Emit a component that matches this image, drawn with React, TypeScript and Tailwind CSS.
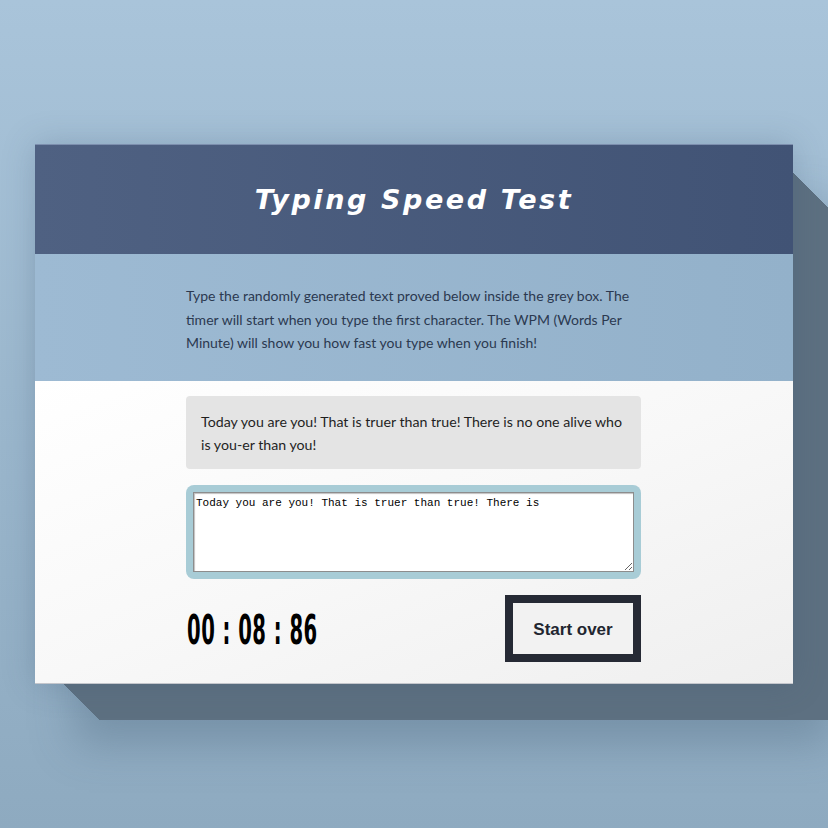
import { useState } from "react";

/* long diagonal shadow: card inset by 14px, swept down-right */
const LONG_SHADOW = Array.from({ length: 50 }, (_, i) => {
  const n = i + 1;
  return `${n}px ${n}px 0 -14px #5d7081`;
}).join(", ");

const QUOTE =
  "Today you are you! That is truer than true! There is no one alive who is you-er than you!";

export default function App() {
  const [typed, setTyped] = useState("Today you are you! That is truer than true! There is");

  return (
    <div className="w-[828px] h-[828px] overflow-hidden bg-gradient-to-b from-[#a9c4da] via-[#9bb7cd] to-[#8eaac0] pt-[144px] pl-[35px]">
      <div
        className="w-[758px] flex flex-col relative"
        style={{ boxShadow: `0 0 30px rgba(60,85,110,0.25), ${LONG_SHADOW}, 40px 60px 40px rgba(70,95,118,0.35)` }}
      >
        {/* Header */}
        <div className="h-[110px] flex items-center justify-center bg-gradient-to-r from-[#4f6182] to-[#415375] border-t border-[#7d8fae]">
          <h1 className="text-white text-[27px] font-bold italic tracking-[2.6px] mt-[2px] font-['DejaVu_Sans',sans-serif]">
            Typing Speed Test
          </h1>
        </div>

        {/* Instructions */}
        <div className="h-[127px] bg-gradient-to-r from-[#9dbad3] to-[#93b1ca] flex items-center pl-[151px] pr-[140px]">
          <p className="text-[14px] leading-[23.5px] text-[#2b3950] mt-[4px] font-['Lato','Noto_Sans',sans-serif]">
            Type the randomly generated text proved below inside the grey box. The timer will start when
            you type the first character. The WPM (Words Per Minute) will show you how fast you type when
            you finish!
          </p>
        </div>

        {/* Test area */}
        <div className="h-[303px] bg-gradient-to-br from-[#ffffff] via-[#f8f8f8] to-[#efefef] border-b border-[#c4c6cc] pt-[15px] pl-[151px] pr-[152px]">
          <div className="bg-[#e4e4e4] rounded-[4px] px-[15px] pt-[14px] pb-[13px] text-[14.2px] leading-[23px] text-[#1f1f1f] font-['Lato','Noto_Sans',sans-serif]">
            {QUOTE}
          </div>

          <div className="mt-[16px] bg-[#a8ccd6] rounded-[8px] p-[7px]">
            <textarea
              className="block w-full h-[80px] bg-white border border-[#8d8d8d] shadow-[inset_1px_1px_1px_rgba(0,0,0,0.25)] px-[2px] pt-[3px] text-[11px] leading-[14px] text-black resize-y outline-none font-['Liberation_Mono','Courier_New',monospace]"
              value={typed}
              onChange={(e) => setTyped(e.target.value)}
            />
          </div>

          <div className="mt-[16px] flex items-center justify-between">
            <div className="text-[40px] font-bold text-black leading-none origin-left scale-x-[0.49] tracking-[1px] whitespace-pre ml-[1px] mt-[2px] font-['DejaVu_Sans',sans-serif]">
              00 : 08 : 86
            </div>
            <button className="w-[136px] h-[67px] border-[8px] border-[#262a35] bg-[#f2f2f2] text-[17px] font-bold text-[#222630] pt-[3px] font-['Liberation_Sans',Arial,sans-serif]">
              Start over
            </button>
          </div>
        </div>
      </div>
    </div>
  );
}
